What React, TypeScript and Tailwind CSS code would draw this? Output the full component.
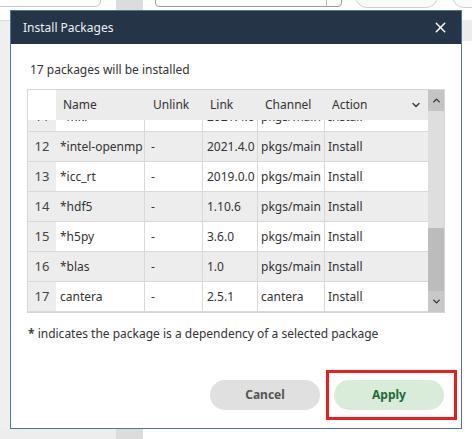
import { X, ChevronDown, ChevronUp } from 'lucide-react';

type Pkg = { n: number; name: string; unlink: string; link: string; channel: string; action: string };

const packages: Pkg[] = [
  { n: 11, name: '*mkl', unlink: '', link: '2021.4.0', channel: 'pkgs/main', action: 'Install' },
  { n: 12, name: '*intel-openmp', unlink: '-', link: '2021.4.0', channel: 'pkgs/main', action: 'Install' },
  { n: 13, name: '*icc_rt', unlink: '-', link: '2019.0.0', channel: 'pkgs/main', action: 'Install' },
  { n: 14, name: '*hdf5', unlink: '-', link: '1.10.6', channel: 'pkgs/main', action: 'Install' },
  { n: 15, name: '*h5py', unlink: '-', link: '3.6.0', channel: 'pkgs/main', action: 'Install' },
  { n: 16, name: '*blas', unlink: '-', link: '1.0', channel: 'pkgs/main', action: 'Install' },
  { n: 17, name: 'cantera', unlink: '-', link: '2.5.1', channel: 'cantera', action: 'Install' },
];

const font = { fontFamily: '"Noto Sans", "Open Sans", sans-serif' };

const PackageRow = ({ pkg }: { pkg: Pkg }) => {
  const shaded = pkg.n % 2 === 0;
  return (
    <div className={`flex h-[30px] border-b border-[#d9d9d9] text-[12px] text-[#333] ${shaded ? 'bg-[#ededed]' : 'bg-white'}`}>
      <div className="w-[28px] shrink-0 bg-[#ededed] flex items-center justify-center text-[13px] text-[#444]">{pkg.n}</div>
      <div className="w-[89px] shrink-0 border-r border-[#d9d9d9] flex items-center pl-[4px] whitespace-nowrap overflow-hidden">{pkg.name}</div>
      <div className="w-[58px] shrink-0 border-r border-[#d9d9d9] flex items-center pl-[6px]">{pkg.unlink}</div>
      <div className="w-[55px] shrink-0 border-r border-[#d9d9d9] flex items-center pl-[4px] whitespace-nowrap overflow-hidden">{pkg.link}</div>
      <div className="w-[67px] shrink-0 border-r border-[#d9d9d9] flex items-center pl-[3px] whitespace-nowrap overflow-hidden">{pkg.channel}</div>
      <div className="flex-1 flex items-center pl-[3px]">{pkg.action}</div>
    </div>
  );
};

export default function App() {
  return (
    <div className="relative w-[472px] h-[439px] overflow-hidden bg-white" style={font}>
      {/* page behind the dialog */}
      <div className="absolute left-0 top-[20px] w-[10px] h-[419px] bg-[#efefef] border-t border-[#dcdcdc]" />
      <div className="absolute left-[-10px] top-[-10px] w-[111px] h-[17px] rounded-[6px] border border-[#c8c8c8] bg-white" />
      <div className="absolute left-[116px] top-0 w-[27px] h-[10px] bg-[#dcdcdc]" />
      <div className="absolute left-[155px] top-[-10px] w-[187px] h-[17px] rounded-[4px] border border-[#9a9a9a] bg-white">
        <div className="absolute left-[170px] top-0 h-full border-l border-[#bbb]" />
      </div>
      <div className="absolute left-[355px] top-[-20px] w-[83px] h-[28px] rounded-[12px] border border-[#d0d0d0] bg-[#fafafa]" />
      <div className="absolute left-[452px] top-[-20px] w-[40px] h-[28px] rounded-[12px] border border-[#d0d0d0] bg-[#fafafa]" />
      <div className="absolute left-[462px] top-[20px] w-[10px] h-[21px] bg-[#ececec]" />
      <div className="absolute left-0 top-[428px] w-[116px] h-[11px] bg-[#ededed]" />
      <div className="absolute left-[116px] top-[428px] w-[27px] h-[11px] bg-[#dcdcdc]" />

      {/* dialog */}
      <div className="absolute left-[10px] top-[10px] w-[452px] h-[419px] border border-[#4d7891] bg-white flex flex-col">
        <div className="h-[33px] bg-[#253547] flex items-center justify-between pl-[12px] pr-[12px] shrink-0">
          <span className="text-[12px] text-[#eceff1]">Install Packages</span>
          <X className="w-[17px] h-[17px] text-white" strokeWidth={2} />
        </div>

        <div className="px-[16px] pt-[16px] text-[12px] text-[#333]">
          <div className="pl-[3px] leading-[20px]">17 packages will be installed</div>

          <div className="mt-[9px] flex border border-[#d6d6d6] h-[224px]">
            <div className="flex-1 flex flex-col min-w-0">
              <div className="flex h-[30px] shrink-0 bg-[#ececec] text-[12px] text-[#333]">
                <div className="w-[28px] bg-white" />
                <div className="w-[89px] pl-[7px] flex items-center">Name</div>
                <div className="w-[58px] pl-[8px] flex items-center">Unlink</div>
                <div className="w-[55px] pl-[7px] flex items-center">Link</div>
                <div className="w-[67px] pl-[7px] flex items-center">Channel</div>
                <div className="flex-1 pl-[7px] pr-[6px] flex items-center justify-between">
                  <span>Action</span>
                  <ChevronDown className="w-[12px] h-[12px] text-[#333]" strokeWidth={2.5} />
                </div>
              </div>
              <div className="flex-1 overflow-hidden">
                <div className="-mt-[18px]">
                  {packages.map((p) => (
                    <PackageRow key={p.n} pkg={p} />
                  ))}
                </div>
              </div>
            </div>
            <div className="w-[16px] shrink-0 bg-[#dedede] flex flex-col">
              <div className="h-[21px] bg-[#c4c4c4] flex items-center justify-center">
                <ChevronUp className="w-[11px] h-[11px] text-[#333]" strokeWidth={3} />
              </div>
              <div className="h-[117px]" />
              <div className="h-[63px] bg-[#bcbcbc]" />
              <div className="flex-1 bg-[#c8c8c8] flex items-center justify-center">
                <ChevronDown className="w-[11px] h-[11px] text-[#333]" strokeWidth={3} />
              </div>
            </div>
          </div>

          <div className="mt-[11px] pl-[1px] leading-[20px] text-[12px] text-[#333]">
            <span className="font-bold text-[#444]">*</span> indicates the package is a dependency of a selected package
          </div>
        </div>

        <div className="flex-1" />
        <div className="flex justify-end items-center gap-[6px] pr-[4px] pb-[8px]">
          <button className="w-[110px] h-[30px] rounded-full bg-[#e0e0e0] text-[12px] font-bold text-[#555]">
            Cancel
          </button>
          <div className="border-[3px] border-[#ee1c1c] pt-[7px] pb-[7px] pl-[5px] pr-[10px]">
            <button className="w-[110px] h-[30px] rounded-full bg-[#d8ecd9] text-[12px] font-bold text-[#1d6b3a] block">
              Apply
            </button>
          </div>
        </div>
      </div>
    </div>
  );
}
